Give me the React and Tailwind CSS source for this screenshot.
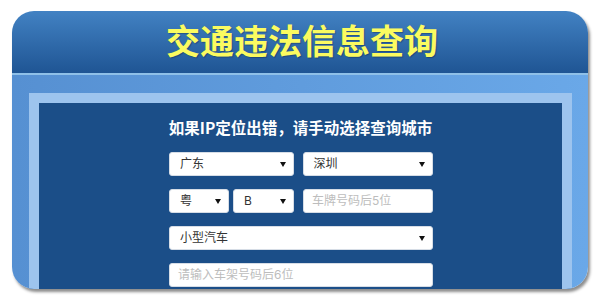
const Arrow = () => (
  <svg width="6" height="5" viewBox="0 0 6 5" className="shrink-0">
    <path d="M0 0 L6 0 L3 5 Z" fill="#111" />
  </svg>
);

function Select({ label, className = '' }) {
  return (
    <div className={`h-[24px] bg-white rounded-[3px] border border-[#d6dde6] flex items-center justify-between pl-[10px] pr-[7px] text-[12px] text-[#333] ${className}`}>
      <span>{label}</span>
      <Arrow />
    </div>
  );
}

function Input({ placeholder, className = '' }) {
  return (
    <div className={`h-[24px] bg-white rounded-[3px] border border-[#d6dde6] flex items-center pl-[8px] text-[12px] text-[#bdbdbd] ${className}`}>
      {placeholder}
    </div>
  );
}

export default function App() {
  return (
    <div className="w-[600px] h-[300px] bg-white pt-[11px] pl-[12px] overflow-hidden" style={{ fontFamily: 'Inter, "Noto Sans CJK SC", sans-serif' }}>
      <div className="w-[576px] h-[278px] rounded-[22px] overflow-hidden flex flex-col shadow-[2px_3px_3px_rgba(0,0,0,0.45)]">
        {/* header */}
        <div className="h-[62px] shrink-0 bg-gradient-to-b from-[#4282c3] to-[#1f5594] flex items-center justify-center">
          <h1 className="text-[34px] leading-none font-bold text-[#fbfb60] pl-[4px] [text-shadow:1px_1px_1px_rgba(0,0,0,0.25)]">交通违法信息查询</h1>
        </div>
        <div className="h-[2px] shrink-0 bg-[#8fc0e8]" />
        {/* body */}
        <div className="flex-1 bg-gradient-to-r from-[#5690d2] to-[#6aa8e8] pt-[18px] pl-[17px] pr-[16px] flex flex-col">
          <div className="flex-1 bg-[#1b4e88] border-[10px] border-b-0 border-[#9dc4ee] flex flex-col items-center">
            <div className="mt-[14px] text-[15.5px] font-bold text-white leading-[20px]" style={{ fontFamily: '"Noto Sans CJK SC", serif' }}>
              如果IP定位出错，请手动选择查询城市
            </div>
            <div className="mt-[15px] w-[265px] flex flex-col gap-[13px] pl-[1px]">
              <div className="flex gap-[9px]">
                <Select label="广东" className="w-[125px]" />
                <Select label="深圳" className="w-[131px]" />
              </div>
              <div className="flex gap-[9px]">
                <div className="flex gap-[4px] w-[125px]">
                  <Select label="粤" className="w-[60px]" />
                  <Select label="B" className="w-[61px]" />
                </div>
                <Input placeholder="车牌号码后5位" className="w-[131px]" />
              </div>
              <Select label="小型汽车" />
              <Input placeholder="请输入车架号码后6位" />
            </div>
          </div>
        </div>
      </div>
    </div>
  );
}
